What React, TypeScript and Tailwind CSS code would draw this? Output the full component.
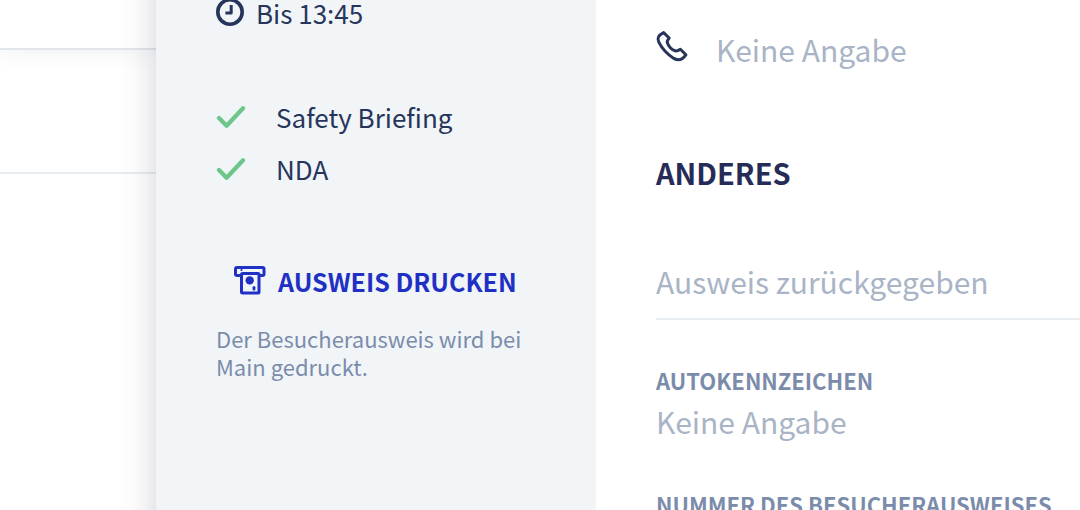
function ClockIcon() {
  return (
    <svg viewBox="0 1 28 28" className="h-7 w-7 shrink-0" fill="none" stroke="currentColor" strokeWidth="3.6" aria-hidden="true">
      <circle cx="14" cy="14" r="12.2" />
      <path d="M15.2 7V15H9.4" strokeLinejoin="round" strokeWidth="3" />
    </svg>
  );
}

function PhoneIcon() {
  return (
    <svg viewBox="0 3 32 32" className="h-8 w-8 shrink-0 overflow-visible" fill="none" stroke="currentColor" strokeWidth="3" strokeLinecap="round" strokeLinejoin="round" aria-hidden="true">
      <path d="M7.6 2.6C2.4 5.2 0.8 8.2 2.8 12.2C6 18.6 11.4 24.4 17.8 28.4C22.2 31 26.4 29.8 29.9 24.8L24.4 19.2C22.6 20.4 21 21.2 19.2 20.8C15.8 20 12.2 16 11.3 12.6C10.8 10.8 11.8 9.6 13.2 8Z" />
    </svg>
  );
}

function CheckIcon() {
  return (
    <svg viewBox="0 -2 30 24" className="h-6 w-[30px] shrink-0 text-[#6fc68a]" fill="none" stroke="currentColor" strokeWidth="4.3" strokeLinecap="round" strokeLinejoin="round" aria-hidden="true">
      <path d="M3 11L10.6 18.8L27 1.2" />
    </svg>
  );
}

function BadgePrinterIcon() {
  return (
    <svg viewBox="0 1 32 30" className="h-[30px] w-8 shrink-0 overflow-visible" fill="none" stroke="currentColor" strokeWidth="3" strokeLinejoin="round" aria-hidden="true">
      <path d="M7.5 10.5H3Q1.5 10.5 1.5 9V4Q1.5 2.5 3 2.5H28.5Q30 2.5 30 4V9Q30 10.5 28.5 10.5H25" />
      <rect x="7.5" y="8.5" width="17.5" height="19.5" rx="1" />
      <circle cx="15.7" cy="15.4" r="4.2" fill="currentColor" stroke="none" />
      <rect x="18.6" y="21.2" width="2.8" height="4.2" rx="1" fill="currentColor" stroke="none" />
      <circle cx="7.5" cy="5" r="1.1" fill="currentColor" stroke="none" />
    </svg>
  );
}

const requirements = ["Safety Briefing", "NDA"];

export default function App() {
  return (
    <div className="flex h-screen overflow-hidden bg-white font-['Noto_Sans_CJK_SC','Noto_Sans',sans-serif] text-[#27355a]">
      <div className="w-[156px] shrink-0">
        <div className="h-[50px] border-b-2 border-[#e1e6eb] shadow-[0_4px_20px_rgba(40,45,90,0.06)]" />
        <div className="h-[124px] border-b-2 border-[#e8edf1]" />
      </div>

      <aside className="relative flex w-[440px] shrink-0 flex-col bg-[#f1f5f8] px-[60px]">
        <div className="pointer-events-none absolute inset-y-0 right-full w-10 bg-[linear-gradient(to_left,rgba(40,35,70,0.11),rgba(40,35,70,0.06)_25%,rgba(40,35,70,0.02)_55%,transparent)]" />

        <div className="-mt-[3px] flex h-8 items-center gap-3">
          <ClockIcon />
          <span className="text-[26px] leading-8">Bis 13:45</span>
        </div>

        <ul className="mt-[62px]">
          {requirements.map((name) => (
            <li key={name} className="flex h-[52px] items-center gap-[30px] text-[26px] leading-8">
              <CheckIcon />
              <span>{name}</span>
            </li>
          ))}
        </ul>

        <button type="button" className="mt-[70px] flex h-8 items-center gap-3 px-[18px] text-[25px] leading-8 font-bold whitespace-nowrap text-[#2130c4]">
          <BadgePrinterIcon />
          AUSWEIS DRUCKEN
        </button>
        <p className="mt-[27px] text-[22px] leading-7 text-[#7b8cab]">Der Besucherausweis wird bei Main gedruckt.</p>
      </aside>

      <main className="relative min-w-0 flex-1 bg-white pt-[29px] pl-[60px] text-[30px] leading-10">
        <div className="flex h-10 items-center gap-7">
          <PhoneIcon />
          <span className="text-[#a9b4c6]">Keine Angabe</span>
        </div>

        <h2 className="mt-[83px] text-[29px] font-bold text-[#262c57]">ANDERES</h2>

        <input
          type="text"
          aria-label="Ausweis zurückgegeben"
          placeholder="Ausweis zurückgegeben"
          className="mt-[69px] block h-[59px] w-full border-b-2 border-[#e8edf1] bg-transparent pb-[17px] leading-10 outline-none placeholder:text-[#a9b4c6]"
        />

        <dl className="mt-[46px]">
          <dt className="text-[22px] leading-7 font-bold whitespace-nowrap text-[#7b8cab]">AUTOKENNZEICHEN</dt>
          <dd className="mt-[7px] text-[#a9b4c6]">Keine Angabe</dd>
          <dt className="mt-[49px] text-[22px] leading-7 font-bold whitespace-nowrap text-[#7b8cab]">NUMMER DES BESUCHERAUSWEISES</dt>
        </dl>
      </main>
    </div>
  );
}
